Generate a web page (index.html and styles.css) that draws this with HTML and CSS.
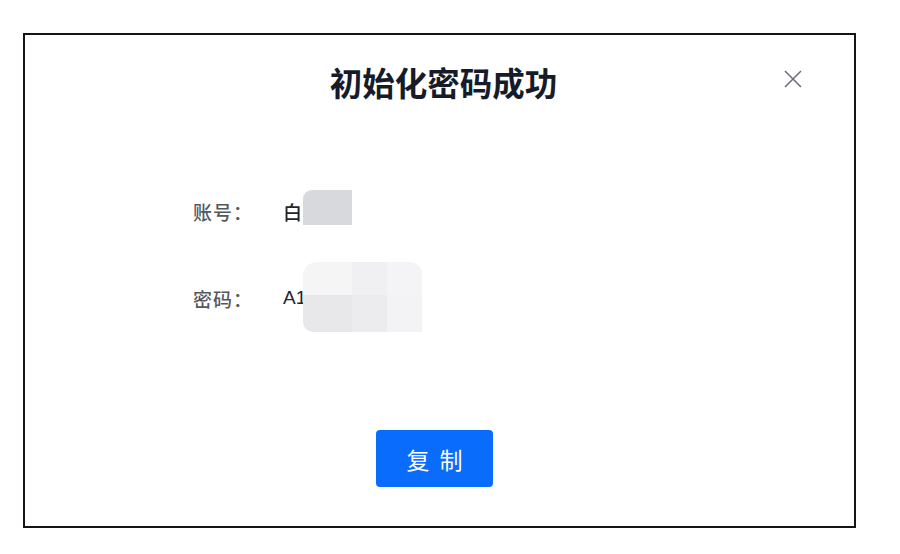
FILE: index.html
```html
<!DOCTYPE html>
<html lang="zh">
<head>
<meta charset="utf-8">
<link rel="stylesheet" href="styles.css">
</head>
<body>
<div class="dialog">
  <div class="header">
    <div></div>
    <div class="title">初始化密码成功</div>
    <div class="close-wrap">
      <svg class="close" width="18" height="18" viewBox="0 0 18 18"><path d="M1 1L17 17M17 1L1 17" stroke="#6b6f78" stroke-width="1.6" fill="none"/></svg>
    </div>
  </div>
  <div class="body">
    <div class="row">
      <span class="label">账号：</span>
      <span class="value">白<span class="mosaic m1"></span></span>
    </div>
    <div class="row row2">
      <span class="label">密码：</span>
      <span class="value">A1<span class="mosaic m2"><i class="c a"></i><i class="c b"></i><i class="c d"></i><i class="c e"></i><i class="c f"></i><i class="c g"></i></span></span>
    </div>
  </div>
  <div class="footer">
    <button class="btn">复制</button>
  </div>
</div>
</body>
</html>
```
FILE: styles.css
```css
html, body {
  margin: 0;
  padding: 0;
  background: #ffffff;
}
body {
  font-family: "Liberation Sans", "Noto Sans CJK SC", sans-serif;
}
.dialog {
  margin: 33px 0 0 23px;
  width: 829px;
  height: 491px;
  border: 2px solid #141414;
  background: #fff;
  display: flex;
  flex-direction: column;
}
.header {
  display: grid;
  grid-template-columns: 1fr auto 1fr;
  align-items: center;
  padding-top: 27px;
  height: 40px;
}
.title {
  font-family: "Noto Sans CJK SC", sans-serif;
  font-size: 32.5px;
  font-weight: 700;
  color: #161b2a;
  line-height: 40px;
  padding-left: 8px;
}
.close-wrap {
  justify-self: end;
  padding-right: 52px;
  display: flex;
  margin-top: -6px;
}
.body {
  margin-top: 91px;
  padding-left: 168px;
  display: flex;
  flex-direction: column;
  gap: 51px;
}
.row {
  display: flex;
  align-items: center;
  height: 36px;
  font-size: 19px;
}
.label {
  width: 90px;
  color: #55575e;
  font-weight: 500;
  letter-spacing: 1px;
}
.value {
  position: relative;
  color: #22252c;
  font-weight: 500;
}
.mosaic {
  position: absolute;
  left: 20px;
}
.m1 {
  top: -8px;
  width: 49px;
  height: 35px;
  background: #d7d9dd;
  border-top-left-radius: 9px;
}
.m2 {
  top: -25px;
  width: 119px;
  height: 70px;
  display: grid;
  grid-template-columns: 49px 35px 35px;
  grid-template-rows: 33px 37px;
  border-radius: 14px 12px 0 10px;
  overflow: hidden;
}
.c { display: block; }
.a { background: #f5f5f6; }
.b { background: #f0f0f2; }
.d { background: #f4f4f6; }
.e { background: #e8e8ea; }
.f { background: #ececee; }
.g { background: #f3f3f5; }
.footer {
  margin-top: 114px;
  display: flex;
  justify-content: center;
}
.btn {
  width: 117px;
  height: 57px;
  margin-left: -10px;
  border: none;
  border-radius: 4px;
  background: #0a6cfb;
  color: #fff;
  font-family: "Noto Sans CJK SC", sans-serif;
  font-size: 23px;
  letter-spacing: 10px;
  padding: 0 0 0 10px;
}
```
